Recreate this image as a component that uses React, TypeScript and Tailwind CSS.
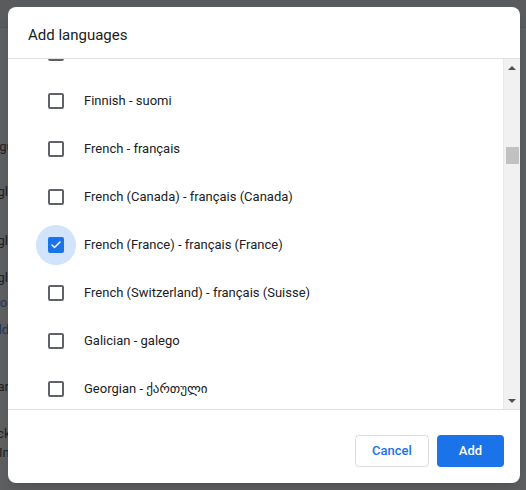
import { Check } from "lucide-react";

const FONT = { fontFamily: "Roboto, 'DejaVu Sans', sans-serif" };

type Lang = { name: string; checked?: boolean };

// first entry is the row scrolled mostly out of view; only its checkbox edge shows
const LANGS: Lang[] = [
  { name: "" },
  { name: "Finnish - suomi" },
  { name: "French - français" },
  { name: "French (Canada) - français (Canada)" },
  { name: "French (France) - français (France)", checked: true },
  { name: "French (Switzerland) - français (Suisse)" },
  { name: "Galician - galego" },
  { name: "Georgian - ქართული" },
  { name: "German - Deutsch" },
];

// faint settings page behind the scrim
const BG_ROWS = [
  { text: "Language", top: "mt-[112px]", shift: "ml-[-22px]", cls: "text-[#202124]" },
  { text: "English", top: "mt-[32px]", shift: "ml-[-17px]", cls: "text-[#202124]" },
  { text: "English", top: "mt-[36px]", shift: "ml-[-17px]", cls: "text-[#202124]" },
  { text: "English", top: "mt-[24px]", shift: "ml-[-17px]", cls: "text-[#202124]" },
  { text: "Go", top: "mt-[12px]", shift: "ml-[-9px]", cls: "text-[#1a73e8]" },
  { text: "Add", top: "mt-[14px]", shift: "ml-[-14px]", cls: "text-[#1a73e8]" },
  { text: "Spell ar", top: "mt-[44px]", shift: "ml-[-34px]", cls: "text-[#202124]" },
  { text: "Basic ck", top: "mt-[34px]", shift: "ml-[-38px]", cls: "text-[#202124]" },
  { text: "In", top: "mt-[6px]", shift: "ml-[-1px]", cls: "text-[#202124]" },
];

function Checkbox({ checked }: { checked?: boolean }) {
  return (
    <div className="relative w-4 h-4 shrink-0">
      {checked && (
        <div className="absolute left-[-12px] top-[-12px] w-10 h-10 rounded-full bg-[#d2e3fc]" />
      )}
      {checked ? (
        <div className="relative w-4 h-4 rounded-[2px] bg-[#1a73e8] flex items-center justify-center">
          <Check className="w-3 h-3 text-white" strokeWidth={3} />
        </div>
      ) : (
        <div className="w-4 h-4 rounded-[2px] border-2 border-[#5f6368]" />
      )}
    </div>
  );
}

export default function App() {
  return (
    <div className="relative w-[526px] h-[490px] overflow-hidden bg-white" style={FONT}>
      {/* Page underneath */}
      <div className="flex flex-col text-[13px] leading-[13px]">
        <div className="h-[28px] bg-[#eef0f1] border-b border-[#dadce0]" />
        {BG_ROWS.map((r, i) => (
          <div key={i} className={`${r.top} ${r.shift} ${r.cls} whitespace-nowrap`}>
            {r.text}
          </div>
        ))}
      </div>

      {/* Scrim */}
      <div className="absolute inset-0 bg-[rgba(32,33,36,0.72)] pt-[7px] pl-[8px]">
        {/* Dialog */}
        <div className="w-[512px] h-[476px] bg-white rounded-[8px] overflow-hidden flex flex-col shadow-lg">
          <div className="h-[52px] shrink-0 flex items-center pl-5 pt-[5px] text-[15px] text-[#202124] border-b border-[#e0e0e0]">
            Add languages
          </div>

          <div className="h-[350px] shrink-0 flex">
            <div className="flex-1 overflow-hidden">
              <div className="mt-[-30px] flex flex-col">
                {LANGS.map((l, i) => (
                  <div key={i} className="h-12 shrink-0 flex items-center pl-10">
                    <Checkbox checked={l.checked} />
                    <span className="ml-5 text-[13px] text-[#202124] whitespace-nowrap">{l.name}</span>
                  </div>
                ))}
              </div>
            </div>

            {/* scrollbar */}
            <div className="w-[17px] shrink-0 bg-[#f1f1f1] border-l border-[#e8e8e8] flex flex-col items-center">
              <div className="h-[17px] flex items-center justify-center">
                <svg width="8" height="4" viewBox="0 0 8 4">
                  <path d="M0 4 L4 0 L8 4 Z" fill="#505050" />
                </svg>
              </div>
              <div className="mt-[71px] w-[13px] h-[17px] bg-[#c1c1c1]" />
              <div className="flex-1" />
              <div className="h-[17px] flex items-center justify-center">
                <svg width="8" height="4" viewBox="0 0 8 4">
                  <path d="M0 0 L8 0 L4 4 Z" fill="#505050" />
                </svg>
              </div>
            </div>
          </div>

          <div className="flex-1 border-t border-[#e0e0e0] flex justify-end items-start gap-2 pt-[25px] pr-4">
            <button className="w-[74px] h-8 rounded-[4px] border border-[#dadce0] bg-white text-[13px] font-medium text-[#1a73e8]">
              Cancel
            </button>
            <button className="w-[67px] h-8 rounded-[4px] bg-[#1a73e8] text-[13px] font-medium text-white">
              Add
            </button>
          </div>
        </div>
      </div>
    </div>
  );
}
